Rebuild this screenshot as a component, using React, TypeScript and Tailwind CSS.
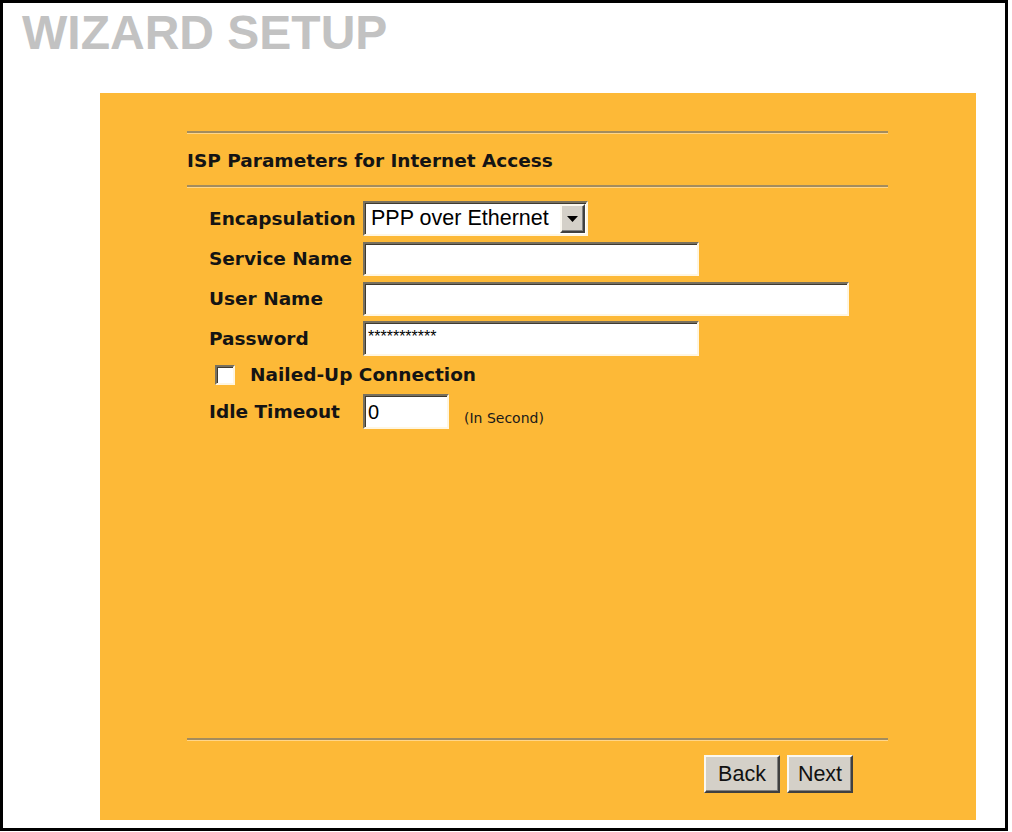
import React from "react";

const bold = { fontFamily: '"DejaVu Sans", Verdana, sans-serif' };
const sans = { fontFamily: '"Liberation Sans", Arial, sans-serif' };

const inset =
  "border-2 border-t-[#77705f] border-l-[#77705f] border-r-[#fff6e2] border-b-[#fff6e2] shadow-[inset_1px_1px_0_#3f3a30] bg-white";

const outset =
  "border-2 border-t-[#fbf8f0] border-l-[#fbf8f0] border-r-[#404040] border-b-[#404040] shadow-[inset_-1px_-1px_0_#808080] bg-[#d4d0c8]";

function Rule() {
  return <div className="h-[3px] border-t-2 border-[#a38c5e] border-b border-b-[#ffd68a]" />;
}

function Row({ label, children }: { label: string; children: React.ReactNode }) {
  return (
    <div className="flex h-[35px] items-center">
      <div className="w-[154px] text-[18.5px] font-bold text-[#141414]" style={bold}>
        {label}
      </div>
      {children}
    </div>
  );
}

export default function App() {
  return (
    <div className="h-[831px] w-[1008px] border-[3px] border-black bg-white">
      <div
        className="pl-[19px] pt-[6px] text-[48px] font-bold leading-[47px] text-[#c2c2c2]"
        style={sans}
      >
        WIZARD SETUP
      </div>

      <div className="ml-[97px] mt-[37px] flex h-[727px] w-[876px] flex-col bg-[#fdb937] pl-[87px]">
        <div className="w-[701px] pt-[38px]">
          <Rule />
        </div>
        <div
          className="mt-[15px] h-[24px] text-[18.5px] font-bold leading-[24px] text-[#141414]"
          style={bold}
        >
          ISP Parameters for Internet Access
        </div>
        <div className="mt-[12px] w-[701px]">
          <Rule />
        </div>

        <div className="mt-[13px] flex flex-col gap-[5px] pl-[22px]">
          <Row label="Encapsulation">
            <div className={`${inset} flex h-[35px] w-[225px] items-center justify-between pl-[6px] pr-[1px]`}>
              <span className="text-[21.5px] text-black" style={sans}>
                PPP over Ethernet
              </span>
              <div className={`${outset} flex h-[29px] w-[25px] items-center justify-center`}>
                <svg width="11" height="6" viewBox="0 0 11 6">
                  <path d="M0 0h11L5.5 6z" fill="#000" />
                </svg>
              </div>
            </div>
          </Row>
          <Row label="Service Name">
            <div className={`${inset} h-[34px] w-[336px]`} />
          </Row>
          <Row label="User Name">
            <div className={`${inset} h-[34px] w-[486px]`} />
          </Row>
          <Row label="Password">
            <div className={`${inset} flex h-[35px] w-[336px] items-start pl-[3px] pt-[6px]`}>
              <span className="text-[16px] leading-[16px] text-black" style={sans}>
                ***********
              </span>
            </div>
          </Row>
          <div className="flex h-[28px] items-center pl-[6px]">
            <div className={`${inset} h-[20px] w-[20px]`} />
            <span className="ml-[15px] text-[18.5px] font-bold text-[#141414]" style={bold}>
              Nailed-Up Connection
            </span>
          </div>
          <Row label="Idle Timeout">
            <div className={`${inset} flex h-[35px] w-[86px] items-center pl-[3px]`}>
              <span className="text-[20px] text-black" style={sans}>
                0
              </span>
            </div>
            <span className="ml-[15px] pt-[14px] text-[14px] text-[#1a1a1a]" style={bold}>
              (In Second)
            </span>
          </Row>
        </div>

        <div className="flex-1" />

        <div className="w-[701px]">
          <Rule />
        </div>
        <div className="mb-[27px] mt-[14px] flex gap-[7px] pl-[517px]">
          <button className={`${outset} h-[38px] w-[76px] text-[21.5px] text-[#111]`} style={sans}>
            Back
          </button>
          <button className={`${outset} h-[38px] w-[66px] text-[21.5px] text-[#111]`} style={sans}>
            Next
          </button>
        </div>
      </div>
    </div>
  );
}
